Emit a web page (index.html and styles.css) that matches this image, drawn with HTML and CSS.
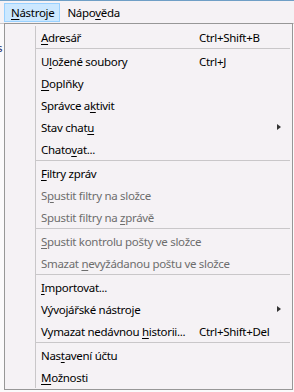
FILE: index.html
```html
<!DOCTYPE html>
<html lang="cs">
<head>
    <meta charset="UTF-8">
    <meta name="viewport" content="width=device-width, initial-scale=1.0">
    <title>Nástroje</title>
    <link rel="stylesheet" href="styles.css">
</head>
<body>
    <div class="menubar">
        <span class="mb-item active"><u>N</u>ástroje</span>
        <span class="mb-item">Nápo<u>v</u>ěda</span>
    </div>

    <div class="behind">
        <span class="behind-text">s</span>
    </div>

    <div class="menu">
        <div class="item"><span class="label"><u>A</u>dresář</span><span class="key">Ctrl+Shift+B</span></div>
        <div class="sep"></div>
        <div class="item"><span class="label">U<u>l</u>ožené soubory</span><span class="key">Ctrl+J</span></div>
        <div class="item"><span class="label"><u>D</u>oplňky</span></div>
        <div class="item"><span class="label">Správce a<u>k</u>tivit</span></div>
        <div class="item sub"><span class="label">Stav chat<u>u</u></span></div>
        <div class="item"><span class="label">Chato<u>v</u>at...</span></div>
        <div class="sep"></div>
        <div class="item"><span class="label"><u>F</u>iltry zpráv</span></div>
        <div class="item off"><span class="label">S<u>p</u>ustit filtry na složce</span></div>
        <div class="item off"><span class="label">Spustit filtry na <u>z</u>právě</span></div>
        <div class="sep"></div>
        <div class="item off"><span class="label"><u>S</u>pustit kontrolu pošty ve složce</span></div>
        <div class="item off"><span class="label">Smazat <u>n</u>evyžádanou poštu ve složce</span></div>
        <div class="sep"></div>
        <div class="item"><span class="label"><u>I</u>mportovat...</span></div>
        <div class="item sub"><span class="label">Vývo<u>j</u>ářské nástroje</span></div>
        <div class="item"><span class="label">Vymazat nedávnou <u>h</u>istorii...</span><span class="key">Ctrl+Shift+Del</span></div>
        <div class="sep"></div>
        <div class="item"><span class="label">Nas<u>t</u>avení účtu</span></div>
        <div class="item"><span class="label"><u>M</u>ožnosti</span></div>
    </div>
</body>
</html>
```

FILE: styles.css
```css
body {
    margin: 0;
    padding: 0;
    width: 294px;
    height: 392px;
    overflow: hidden;
    background: #fbfafb;
    font-family: 'Noto Sans', 'Segoe UI', sans-serif;
    font-size: 11.5px;
    letter-spacing: -0.3px;
    color: #000;
    position: relative;
}

u {
    text-decoration: underline;
    text-underline-offset: 2px;
}

.menubar {
    height: 24px;
    border-top: 1px solid #6f9fc6;
    border-bottom: 1px solid #c9c7c9;
    background: #f5f2f5;
    display: flex;
    align-items: center;
    padding-left: 4px;
    box-sizing: border-box;
}

.mb-item {
    height: 19px;
    line-height: 18px;
    padding: 0 5px 0 6px;
    box-sizing: border-box;
    border: 1px solid transparent;
}

.mb-item.active {
    background: #cce8ff;
    border-color: #99d1ff;
}

.behind {
    height: 368px;
    width: 4px;
    background: #fbfafb;
    position: relative;
}

.behind-text {
    position: absolute;
    left: -3px;
    top: 16px;
    color: #1a2a6a;
}

.menu {
    position: absolute;
    left: 4px;
    top: 23px;
    width: 289px;
    height: 367px;
    box-sizing: border-box;
    border: 1px solid #979797;
    background: #f5f2f5 linear-gradient(to right, transparent 30px, #c9c7c9 30px, #c9c7c9 31px, transparent 31px) no-repeat;
    background-size: 100% calc(100% - 3px);
    background-position: 0 2px;
    padding: 2px 2px 0 2px;
}

.item {
    height: 22px;
    display: flex;
    align-items: center;
    padding-left: 34px;
    position: relative;
}

.label {
    flex: 1;
    white-space: nowrap;
}

.key {
    width: 91px;
    white-space: nowrap;
}

.item.off {
    color: #6d6d6d;
}

.item.sub::after {
    content: '';
    position: absolute;
    right: 9px;
    top: 8px;
    border-left: 4px solid #333;
    border-top: 3.5px solid transparent;
    border-bottom: 3.5px solid transparent;
}

.sep {
    height: 2px;
    margin-left: 29px;
    border-top: 1px solid #c9c7c9;
    box-sizing: border-box;
}
```
